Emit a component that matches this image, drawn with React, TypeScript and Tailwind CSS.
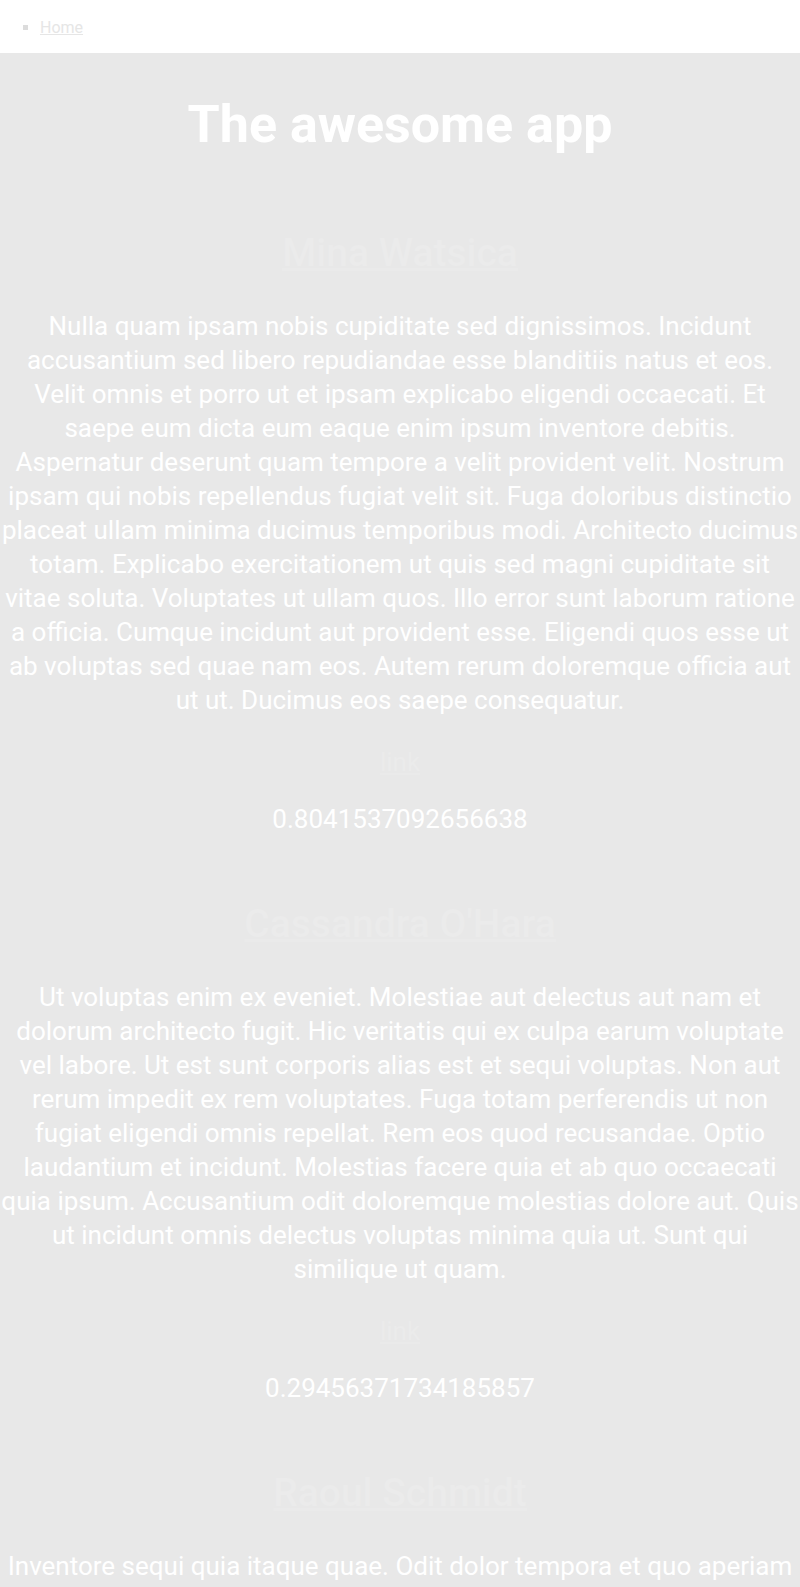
import React from "react";

type Person = {
  name: string;
  bio: string;
  score: string;
};

const people: Person[] = [
  {
    name: "Mina Watsica",
    bio: "Nulla quam ipsam nobis cupiditate sed dignissimos. Incidunt accusantium sed libero repudiandae esse blanditiis natus et eos. Velit omnis et porro ut et ipsam explicabo eligendi occaecati. Et saepe eum dicta eum eaque enim ipsum inventore debitis. Aspernatur deserunt quam tempore a velit provident velit. Nostrum ipsam qui nobis repellendus fugiat velit sit. Fuga doloribus distinctio placeat ullam minima ducimus temporibus modi. Architecto ducimus totam. Explicabo exercitationem ut quis sed magni cupiditate sit vitae soluta. Voluptates ut ullam quos. Illo error sunt laborum ratione a officia. Cumque incidunt aut provident esse. Eligendi quos esse ut ab voluptas sed quae nam eos. Autem rerum doloremque officia aut ut ut. Ducimus eos saepe consequatur.",
    score: "0.8041537092656638",
  },
  {
    name: "Cassandra O'Hara",
    bio: "Ut voluptas enim ex eveniet. Molestiae aut delectus aut nam et dolorum architecto fugit. Hic veritatis qui ex culpa earum voluptate vel labore. Ut est sunt corporis alias est et sequi voluptas. Non aut rerum impedit ex rem voluptates. Fuga totam perferendis ut non fugiat eligendi omnis repellat. Rem eos quod recusandae. Optio laudantium et incidunt. Molestias facere quia et ab quo occaecati quia ipsum. Accusantium odit doloremque molestias dolore aut. Quis ut incidunt omnis delectus voluptas minima quia ut. Sunt qui similique ut quam.",
    score: "0.29456371734185857",
  },
  {
    name: "Raoul Schmidt",
    bio: "Inventore sequi quia itaque quae. Odit dolor tempora et quo aperiam nisi. Quia dolores tenetur voluptatem. Sed ipsa et est quae. Ut rerum aut nisi ut minus.",
    score: "0.5218470936615802",
  },
];

const PersonCard: React.FC<{ person: Person }> = ({ person }) => (
  <section className="flex flex-col items-center text-center">
    <a href="#" className="mt-[67px] text-[39px] leading-[46px] font-medium text-[#ebebeb] underline decoration-[#eaeaea]">
      {person.name}
    </a>
    <p className="mt-[33px] text-[26px] leading-[34px] text-white">{person.bio}</p>
    <a href="#" className="mt-[30px] text-[26px] leading-[30px] text-[#ebebeb] underline decoration-[#eaeaea]">
      link
    </a>
    <p className="mt-[27px] text-[26px] leading-[30px] text-white">{person.score}</p>
  </section>
);

const App: React.FC = () => {
  return (
    <div className="min-h-screen bg-[#e8e8e8] font-['Roboto',sans-serif]">
      <nav className="h-[53px] bg-white">
        <ul className="list-[square] pl-[40px] pt-[18px] text-[16px] leading-[20px] text-[#dcdcdc] marker:text-[#dcdcdc]">
          <li>
            <a href="/" className="text-[#e6e6e6] underline">
              Home
            </a>
          </li>
        </ul>
      </nav>
      <main className="pb-10">
        <h1 className="pt-[42px] pb-[8px] text-center text-[52px] leading-[60px] font-bold text-white">The awesome app</h1>
        {people.map((p) => (
          <PersonCard key={p.name} person={p} />
        ))}
      </main>
    </div>
  );
};

export default App;
